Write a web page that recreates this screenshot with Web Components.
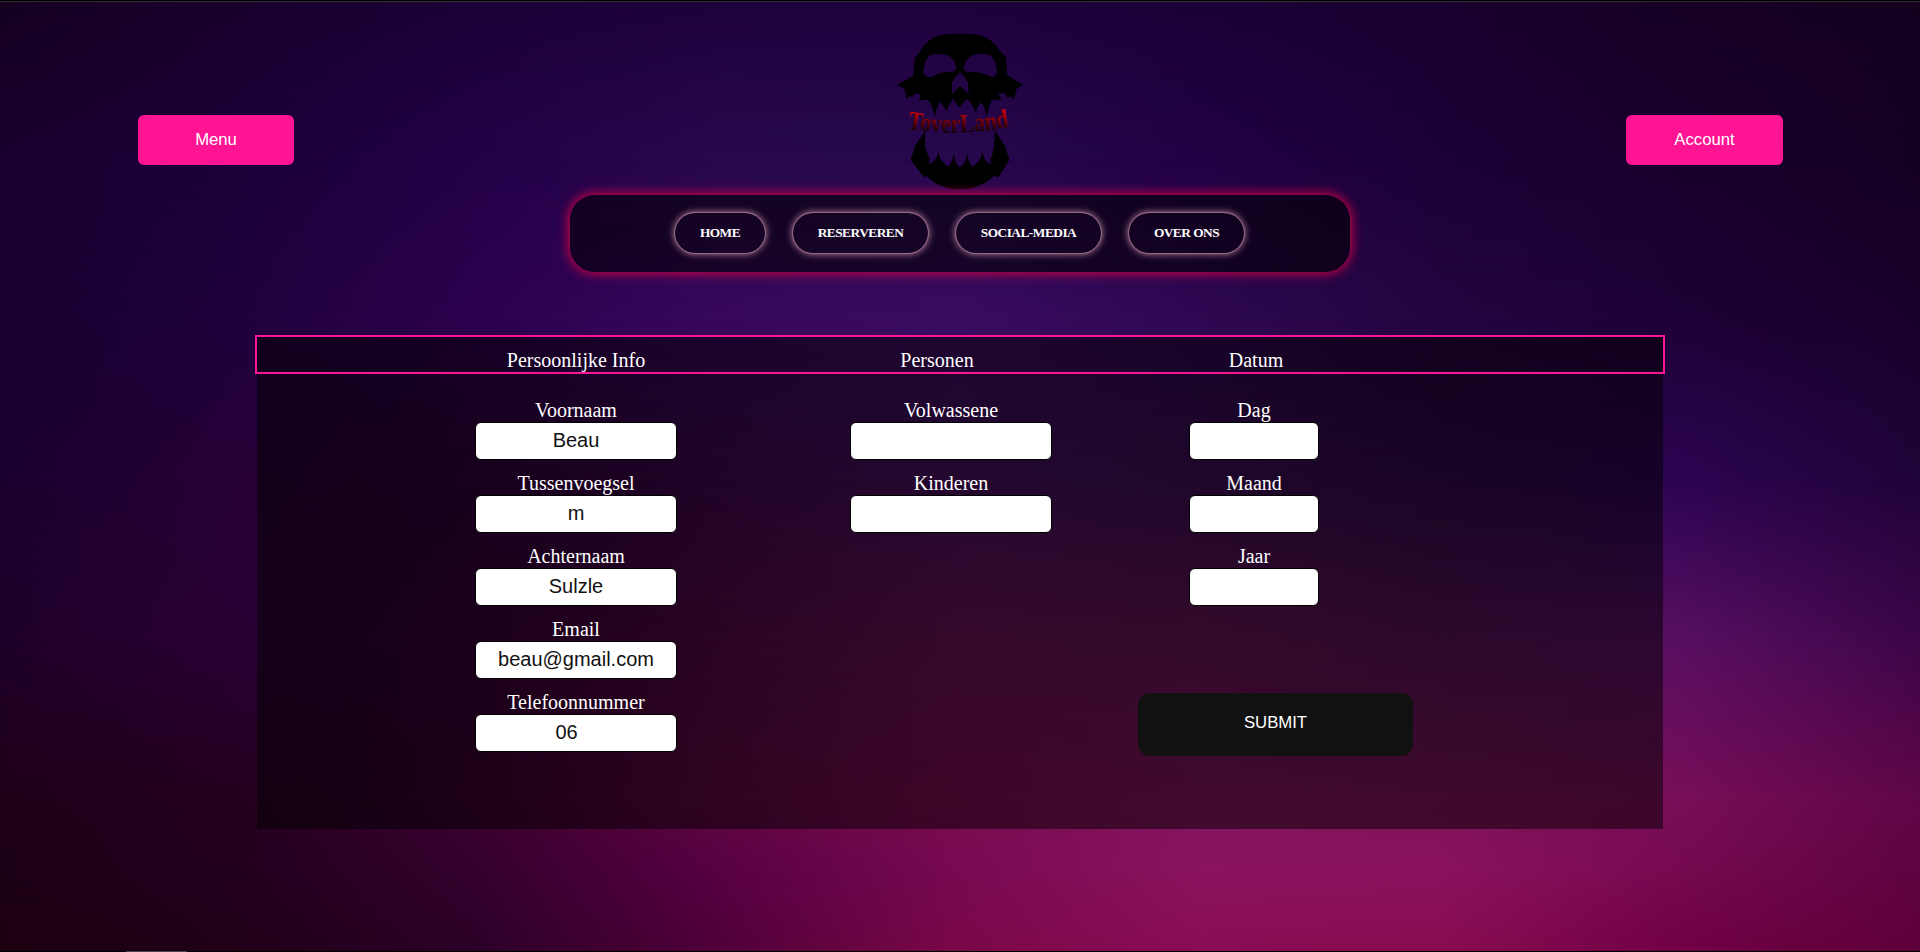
<!DOCTYPE html>
<html lang="nl">
<head>
<meta charset="utf-8">
<title>ToverLand</title>
<style>
html,body{margin:0;height:100%;overflow:hidden;background:#14001f}
</style>
</head>
<body>
<tover-page>
  <pink-button slot="menu">Menu</pink-button>
  <skull-logo slot="logo"></skull-logo>
  <pink-button slot="account" style="--w:157px">Account</pink-button>
  <nav-bar slot="nav">
    <nav-pill style="width:90px">HOME</nav-pill>
    <nav-pill style="width:135px">RESERVEREN</nav-pill>
    <nav-pill style="width:145px">SOCIAL-MEDIA</nav-pill>
    <nav-pill style="width:115px">OVER ONS</nav-pill>
  </nav-bar>
  <booking-form slot="form">
    <span slot="h1">Persoonlijke Info</span><span slot="h2">Personen</span><span slot="h3">Datum</span>
    <form-field slot="c1" label="Voornaam">Beau</form-field>
    <form-field slot="c1" label="Tussenvoegsel">m</form-field>
    <form-field slot="c1" label="Achternaam">Sulzle</form-field>
    <form-field slot="c1" label="Email">beau@gmail.com</form-field>
    <form-field slot="c1" label="Telefoonnummer" style="--spin:19px">06</form-field>
    <form-field slot="c2" label="Volwassene"></form-field>
    <form-field slot="c2" label="Kinderen"></form-field>
    <form-field slot="c3" label="Dag"></form-field>
    <form-field slot="c3" label="Maand"></form-field>
    <form-field slot="c3" label="Jaar"></form-field>
    <submit-button slot="c3">SUBMIT</submit-button>
  </booking-form>
</tover-page>
<script>
const define = (name, html, setup) => customElements.define(name, class extends HTMLElement {
  constructor() {
    super();
    this.attachShadow({ mode: 'open' }).innerHTML = html;
  }
  connectedCallback() { if (setup) setup(this, this.shadowRoot); }
});

// Colour mesh: each row is a horizontal gradient that fades in over the row above it.
const xs = [0, 240, 480, 720, 960, 1200, 1440, 1680, 1920];
const mesh = [
  [0,   '150020 18002e 1c0036 1e003c 1e003c 1b0036 190030 160024 150020'],
  [160, '180030 1c0038 230048 29084e 27084e 220045 1c0037 18002d 150023'],
  [320, '180030 20003c 2c004e 38085c 3a0c60 2e0852 24043f 1e0036 19002c'],
  [480, '1c0030 260036 30003c 420850 4a1060 3e0e56 330a4c 2c0452 200338'],
  [640, '1f0029 290034 380038 560848 6c1258 681456 581258 580f62 3c0648'],
  [800, '1e0019 24001f 3c0030 600840 7c0c50 821460 7e1458 780e58 600648'],
  [870, '1c0015 230020 34002c 580044 780a52 8a145e 8a125e 760a50 5e0440'],
  [952, '1c0010 210018 2c0028 500038 7a0848 8a0c54 880c50 700044 5e0038']
];
define('mesh-backdrop', `<style>
  :host{display:block;position:absolute;inset:0;overflow:hidden;z-index:-1}
  div{position:absolute;left:0;right:0;bottom:0}
</style>`, (el, root) => {
  mesh.forEach(([y, row], i) => {
    const d = document.createElement('div');
    const top = i ? mesh[i - 1][0] : 0;
    d.style.top = top + 'px';
    d.style.background = 'linear-gradient(90deg,' + row.split(' ').map((c, k) => `#${c} ${xs[k]}px`).join(',') + ')';
    if (i) d.style.maskImage = `linear-gradient(180deg,transparent,#000 ${y - top}px)`;
    root.append(d);
  });
});

define('tover-page', `<style>
  :host{display:flex;flex-direction:column;position:relative;z-index:0;height:952px;width:1920px;font-family:"Liberation Serif",serif;color:#fff}
  .top{height:1px;background:#000;border-bottom:1px solid #303036;flex:none}
  header{display:flex;justify-content:space-between;align-items:flex-start;padding:18px 137px 0 138px;height:175px;flex:none}
  .side{padding-top:95px;width:160px;display:flex}
  .side.r{justify-content:flex-end}
  .nav{display:flex;justify-content:center}
  .form{display:flex;justify-content:center;margin-top:63px}
  footer{margin-top:auto;height:1px;background:#000;display:flex;padding-left:126px}
  footer i{width:61px;background:#46464a}
</style>
<mesh-backdrop></mesh-backdrop>
<div class="top"></div>
<header><div class="side"><slot name="menu"></slot></div><slot name="logo"></slot><div class="side r"><slot name="account"></slot></div></header>
<div class="nav"><slot name="nav"></slot></div>
<div class="form"><slot name="form"></slot></div>
<footer><i></i></footer>`);

define('pink-button', `<style>
  :host{display:block}
  button{display:block;width:var(--w,156px);height:50px;border:0;border-radius:6px;padding:0 0 1px;background:#ff1493;color:#fff;font:16.7px "Liberation Sans",Arial,sans-serif}
</style><button><slot></slot></button>`);

define('submit-button', `<style>
  :host{display:block;margin:75px 0 0 -51px}
  button{display:block;width:275px;height:63px;border:0;border-radius:12px;padding:0 0 3px;background:#111;color:#fff;font:16.7px "Liberation Sans",Arial,sans-serif}
</style><button><slot></slot></button>`);

define('nav-bar', `<style>
  :host{display:flex;box-sizing:border-box;width:780px;height:77px;padding:18px 1px 0 0;justify-content:center;gap:28px;border-radius:25px;
    background:rgba(0,0,0,.55);box-shadow:0 0 11px 2px rgba(205,0,70,.95)}
</style><slot></slot>`);

define('nav-pill', `<style>
  :host{display:flex;align-items:center;justify-content:center;height:40px;border-radius:20px;white-space:nowrap;
    box-shadow:0 0 0 1px rgba(165,115,150,.7),0 0 7px 1px rgba(215,155,180,.85);font-weight:bold;font-size:13.33px;letter-spacing:-.5px}
</style><slot></slot>`);

define('form-field', `<style>
  :host{display:block;width:var(--fw,202px);text-align:center}
  label{display:block;font-size:20px;line-height:23px;height:23px;white-space:nowrap}
  .box{box-sizing:border-box;height:38px;border:1px solid #000;border-radius:6px;background:#fff;color:#111;font:20px/34px "Liberation Sans",Arial,sans-serif;padding-right:var(--spin,0)}
</style><label></label><div class="box"><slot></slot></div>`, (el, root) => {
  root.querySelector('label').textContent = el.getAttribute('label');
});

define('booking-form', `<style>
  :host{display:block;width:1406px;height:494px;background:rgba(0,0,0,.5);font-size:20px;line-height:23px}
  .head{box-sizing:border-box;height:39px;width:1410px;margin-left:-2px;border:2px solid #ff1493;padding-top:12px;display:grid;grid-template-columns:218px 202px 159px 202px 109px 218px}
  .head div{text-align:center;white-space:nowrap}
  .head div:nth-child(1){grid-column:2}
  .head div:nth-child(2){grid-column:4}
  .head div:nth-child(3){grid-column:6}
  .cols{display:flex;padding:25px 0 0 218px}
  .col{display:flex;flex-direction:column;gap:12px;width:202px}
  .two{margin-left:173px}
  .three{margin-left:137px;--fw:130px}
</style>
<div class="head"><div><slot name="h1"></slot></div><div><slot name="h2"></slot></div><div><slot name="h3"></slot></div></div>
<div class="cols"><div class="col"><slot name="c1"></slot></div><div class="col two"><slot name="c2"></slot></div><div class="col three"><slot name="c3"></slot></div></div>`);

define('skull-logo', `<style>:host{display:block;width:160px;height:170px;margin-right:2px}svg{display:block}</style>
<svg width="160" height="170" viewBox="0 0 480 510">
  <defs>
    <linearGradient id="g" gradientUnits="userSpaceOnUse" x1="0" y1="270" x2="0" y2="335"><stop offset="0" stop-color="#d80000"/><stop offset=".45" stop-color="#7c0005"/><stop offset="1" stop-color="#100008"/></linearGradient>
    <path id="arc" d="M82 327Q238 352 398 319"/>
  </defs>
  <path fill-rule="evenodd" d="M190 44Q240 39 292 44Q338 54 357 90L378 112L382 166L429 194L410 206L402 240Q394 224 382 234Q377 216 366 220Q359 218 355 224Q364 232 363 243Q350 236 335 240Q326 258 320 292Q315 258 302 247Q290 262 287 281Q283 258 261 236Q248 247 240 263Q225 248 220 236Q202 258 200 275Q194 258 180 246Q168 262 165 291Q157 254 144 240Q130 238 115 243L123 228Q118 220 111 222Q102 216 97 234Q88 222 81 239L73 206L51 194L100 167L104 114L119 97Q144 49 190 44ZM148 106Q176 97 208 108Q228 122 229 148L218 156Q184 153 158 170Q141 175 130 161Q129 129 148 106ZM274 108Q305 96 332 106Q350 126 351 158Q346 170 336 172Q300 153 262 157L250 148Q254 119 274 108ZM240 155Q252 168 264 188L266 222L240 198L216 222L215 188Q228 168 240 155Z"/>
  <path d="M135 333L136 386L150 418L146 433Q169 424 175 395Q178 422 205 440Q218 425 221 401Q227 435 240 441Q256 436 262 401Q265 428 277 440Q300 427 308 395Q311 426 333 434L331 418Q346 390 344 331L375 378L388 420L356 472L342 468Q300 508 240 508Q178 508 139 467L133 473L92 419L106 376Z"/>
  <text font-family="Liberation Serif,serif" font-weight="bold" font-size="80" fill="url(#g)"><textPath href="#arc" textLength="308" lengthAdjust="spacingAndGlyphs">ToverLand</textPath></text>
</svg>`);
</script>
</body>
</html>
